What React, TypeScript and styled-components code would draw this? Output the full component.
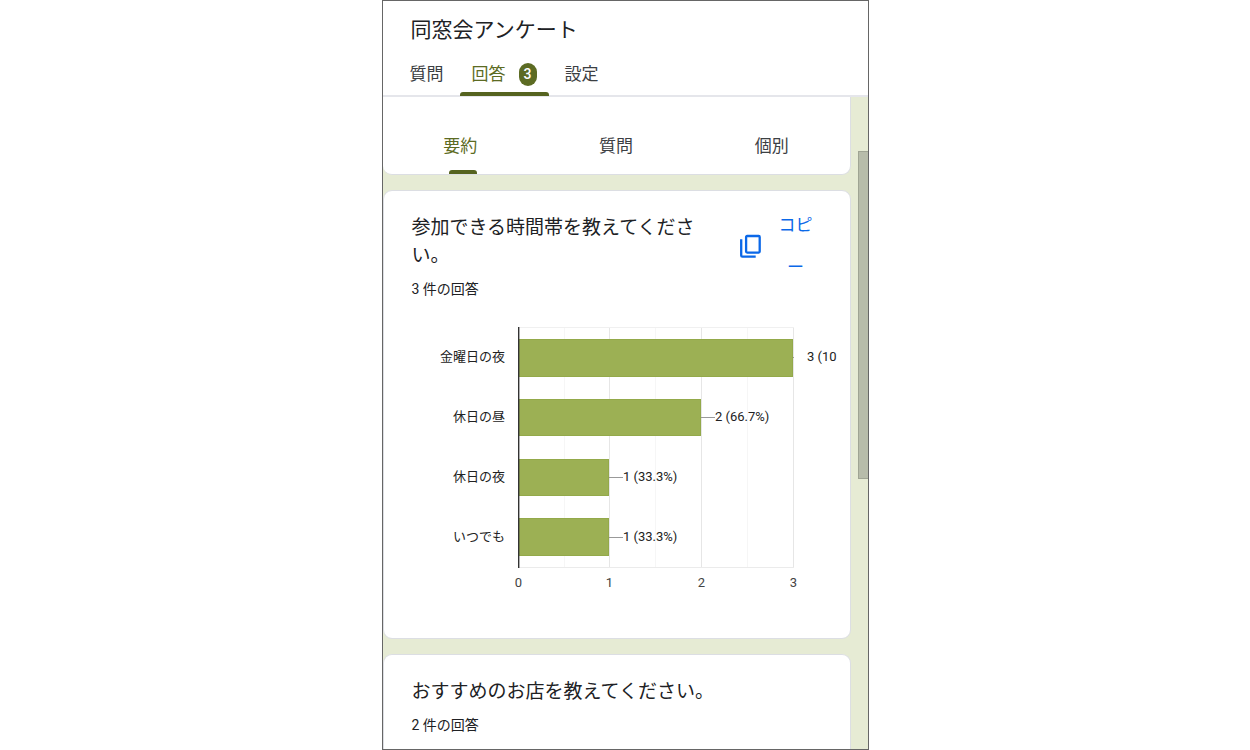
import React from "react";
import styled, { createGlobalStyle } from "styled-components";

const color = {
  olive: "#5c6b23",
  oliveDark: "#55631f",
  page: "#e6ebd4",
  line: "#dcdee3",
  text: "#202124",
  muted: "#3c4043",
  link: "#0b68e8",
  bar: "#9cb054",
};

const GlobalStyle = createGlobalStyle`
  *, *::before, *::after { box-sizing: border-box; }
  body {
    margin: 0;
    background: #fff;
    color: ${color.text};
    font-family: Roboto, "Noto Sans CJK JP", sans-serif;
  }
  h1, h2, p { margin: 0; font-weight: 400; }
  button {
    border: 0;
    padding: 0;
    background: none;
    font: inherit;
    color: inherit;
    cursor: pointer;
  }
`;

const Frame = styled.div`
  position: relative;
  display: flex;
  flex-direction: column;
  width: 100%;
  max-width: 487px;
  min-height: 100vh;
  margin: 0 auto;
  border: 1px solid #666;
  background: ${color.page};
`;

const Header = styled.header`
  padding: 13px 28px 0;
  background: #fff;
  border-bottom: 2px solid #e5e6eb;
`;

const Title = styled.h1`
  margin-bottom: 6px;
  font-size: 21px;
  line-height: 32px;
`;

const Tabs = styled.nav`
  display: flex;
  gap: 4px;
  margin: 0 -13px -1px;
`;

const Tab = styled.button<{ $active?: boolean }>`
  position: relative;
  display: flex;
  align-items: center;
  gap: 13px;
  height: 44px;
  padding: 0 12px;
  font-size: 17px;
  line-height: 24px;
  color: ${(p) => (p.$active ? color.olive : color.muted)};

  &::after {
    content: "";
    display: ${(p) => (p.$active ? "block" : "none")};
    position: absolute;
    inset: auto 0 0;
    height: 4px;
    border-radius: 3px 3px 0 0;
    background: ${color.oliveDark};
  }
`;

const Badge = styled.span`
  width: 18px;
  border-radius: 9px;
  background: ${color.olive};
  color: #fff;
  font-size: 14px;
  font-weight: 500;
  line-height: 23px;
  text-align: center;
`;

const Main = styled.main`
  flex: 1;
  display: flex;
  flex-direction: column;
  gap: 15px;
  padding-right: 17px;
`;

const Card = styled.section`
  padding: 23px 12px 35px 28px;
  border: 1px solid ${color.line};
  border-radius: 9px;
  background: #fff;
`;

const ViewCard = styled(Card)`
  display: grid;
  grid-template-columns: repeat(3, 1fr);
  padding: 21px 0 0;
  border-width: 0 1px 1px 0;
  border-radius: 0 0 9px 9px;
`;

const LastCard = styled(Card)`
  flex: 1;
  padding-bottom: 13px;
  border-bottom: 0;
  border-radius: 9px 9px 0 0;
`;

const ViewTab = styled.button<{ $active?: boolean }>`
  height: 56px;
  font-size: 17px;
  line-height: 56px;
  color: ${(p) => (p.$active ? color.olive : color.muted)};

  span {
    display: inline-block;
    position: relative;
  }

  span::after {
    content: "";
    display: ${(p) => (p.$active ? "block" : "none")};
    position: absolute;
    right: 0;
    bottom: 0;
    width: 28px;
    height: 4px;
    border-radius: 3px 3px 0 0;
    background: ${color.oliveDark};
  }
`;

const CardHead = styled.div`
  display: flex;
  align-items: flex-start;
  gap: 30px;
`;

const Heading = styled.div`
  flex: 1;
`;

const Question = styled.h2`
  margin-bottom: 9px;
  font-size: 19px;
  line-height: 28px;
`;

const Count = styled.p`
  font-size: 14px;
  line-height: 20px;
`;

const CopyButton = styled.button`
  display: flex;
  align-items: center;
  gap: 18px;
  margin: -10px 25px 0 0;
  color: ${color.link};
  font-size: 17px;
  line-height: 42px;
`;

const CopyLabel = styled.span`
  width: 34px;
  line-break: anywhere;
`;

const ChartSvg = styled.svg`
  display: block;
  max-width: 100%;
  margin: 14px 0 0 -1px;
  font-size: 13px;
  fill: #222;
`;

const Thumb = styled.div`
  position: absolute;
  top: 150px;
  right: 0;
  width: 10px;
  height: 328px;
  border: 1px solid #9fa493;
  border-right: 0;
  background: #b7bcaa;
`;

const CopyIcon = () => (
  <svg width="21" height="24" viewBox="0 0 21 24" fill="none" stroke="currentColor" strokeWidth="2.3" aria-hidden="true">
    <rect x="6.1" y="2" width="13.6" height="16.6" rx="1" />
    <path d="M1.2 5.2v16.2a1.2 1.2 0 0 0 1.2 1.2h13.3" />
  </svg>
);

const rows = [
  { name: "金曜日の夜", value: 3, label: "3 (10", top: 26, height: 38 },
  { name: "休日の昼", value: 2, label: "2 (66.7%)", top: 86, height: 37 },
  { name: "休日の夜", value: 1, label: "1 (33.3%)", top: 146, height: 37 },
  { name: "いつでも", value: 1, label: "1 (33.3%)", top: 205, height: 38 },
];

const tickX = [107, 198, 290, 382];
const minorX = [153, 244, 336];

const Chart = () => (
  <ChartSvg width="426" height="290" viewBox="0 0 426 290" role="img" aria-label="参加できる時間帯">
    {minorX.map((x) => (
      <rect key={x} x={x} y="14" width="1" height="241" fill="#f6f6f6" />
    ))}
    {tickX.slice(1).map((x) => (
      <rect key={x} x={x} y="14" width="1" height="241" fill="#e6e6e6" />
    ))}
    <rect x="108" y="14" width="275" height="1" fill="#f0f0f0" />
    <rect x="108" y="254" width="275" height="1" fill="#ebebeb" />
    {rows.map((r, i) => {
      const end = tickX[r.value];
      const mid = 44 + i * 60;
      return (
        <g key={r.name}>
          <rect x="107.5" y={r.top + 0.5} width={end - 108} height={r.height - 1} fill={color.bar} stroke="#93a94a" />
          <rect x={end} y={mid} width={r.value === 3 ? 1 : 14} height="1" fill="#999" />
          <text x="94" y={mid + 4} textAnchor="end">
            {r.name}
          </text>
          <text x={end + 14} y={mid + 4}>
            {r.label}
          </text>
        </g>
      );
    })}
    <rect x="107" y="14" width="1.4" height="241" fill="#333" />
    {tickX.map((x, n) => (
      <text key={x} x={x + 0.5} y="274" textAnchor="middle" fill="#444">
        {n}
      </text>
    ))}
  </ChartSvg>
);

export default function App() {
  return (
    <>
      <GlobalStyle />
      <Frame>
        <Header>
          <Title>同窓会アンケート</Title>
          <Tabs>
            <Tab>質問</Tab>
            <Tab $active>
              回答<Badge>3</Badge>
            </Tab>
            <Tab>設定</Tab>
          </Tabs>
        </Header>
        <Main>
          <ViewCard>
            <ViewTab $active>
              <span>要約</span>
            </ViewTab>
            <ViewTab>
              <span>質問</span>
            </ViewTab>
            <ViewTab>
              <span>個別</span>
            </ViewTab>
          </ViewCard>
          <Card>
            <CardHead>
              <Heading>
                <Question>参加できる時間帯を教えてください。</Question>
                <Count>3 件の回答</Count>
              </Heading>
              <CopyButton>
                <CopyIcon />
                <CopyLabel>コピー</CopyLabel>
              </CopyButton>
            </CardHead>
            <Chart />
          </Card>
          <LastCard>
            <Question>おすすめのお店を教えてください。</Question>
            <Count>2 件の回答</Count>
          </LastCard>
        </Main>
        <Thumb />
      </Frame>
    </>
  );
}
